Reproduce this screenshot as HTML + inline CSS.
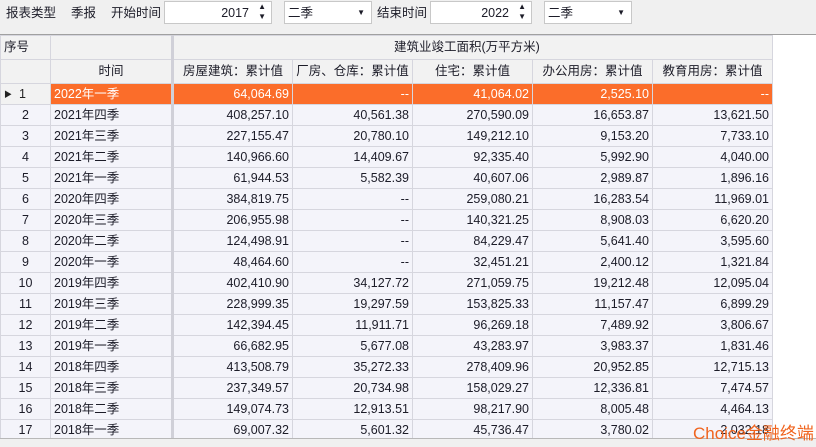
<!DOCTYPE html><html><head><meta charset="utf-8"><style>
*{margin:0;padding:0;box-sizing:border-box}
body{width:816px;height:447px;background:#f0f0f0;font-family:"Liberation Sans","Noto Sans CJK SC",sans-serif;font-size:12.5px;color:#1c1c28;position:relative;overflow:hidden}
.a{position:absolute;white-space:nowrap;line-height:16px}
.box{position:absolute;background:#fff;border:1px solid #c8c8c8;height:23px;top:1px}
.box .a{top:3px}
.wrap{position:absolute;left:0;top:34px;width:816px;height:405px;background:#fff;border-top:1px solid #a0a0a0}
table{border-collapse:collapse;table-layout:fixed;position:absolute;left:0;top:0}
td{border:1px solid #d6d6de;height:21px;line-height:19px;padding:0 3px;background:#f4f4fa;overflow:hidden;white-space:nowrap;vertical-align:middle}
td span{display:inline-block;line-height:19px;vertical-align:top}
td.r{text-align:right}
td.c{text-align:center}
tr.h td{background:#f2f2f2;height:24px}
tr.sel td{background:#fb6d2a;color:#fff}
td.sep{border-right:3px solid #d0d0d8}
</style></head><body>
<div class="a" style="left:6px;top:5px">报表类型</div>
<div class="a" style="left:71px;top:5px">季报</div>
<div class="a" style="left:111px;top:5px">开始时间</div>
<div class="box" style="left:164px;width:108px"><span class="a" style="right:22px">2017</span><span class="a" style="right:5px;top:0;font-size:8px;line-height:10px">▲<br>▼</span></div>
<div class="box" style="left:284px;width:88px"><span class="a" style="left:3px">二季</span><span class="a" style="right:6px;font-size:8px">▼</span></div>
<div class="a" style="left:377px;top:5px">结束时间</div>
<div class="box" style="left:430px;width:102px"><span class="a" style="right:22px">2022</span><span class="a" style="right:5px;top:0;font-size:8px;line-height:10px">▲<br>▼</span></div>
<div class="box" style="left:544px;width:88px"><span class="a" style="left:3px">二季</span><span class="a" style="right:6px;font-size:8px">▼</span></div>
<div class="wrap">
<table>
<colgroup><col style="width:50px"><col style="width:122px"><col style="width:120px"><col style="width:120px"><col style="width:120px"><col style="width:120px"><col style="width:120px"></colgroup>
<tr class="h"><td>序号</td><td class="sep"></td><td colspan="5" style="padding-left:220px">建筑业竣工面积(万平方米)</td></tr>
<tr class="h"><td></td><td class="c sep">时间</td><td class="c">房屋建筑：累计值</td><td class="c">厂房、仓库：累计值</td><td class="c">住宅：累计值</td><td class="c">办公用房：累计值</td><td class="c">教育用房：累计值</td></tr>
<tr class="sel"><td style="background:#f2f2f2;color:#222"><span style="font-size:8px">▶</span>&nbsp;&nbsp;1</td><td class="sep"><span>2022年一季</span></td><td class="r">64,064.69</td><td class="r">--</td><td class="r">41,064.02</td><td class="r">2,525.10</td><td class="r">--</td></tr>
<tr><td class="c">2</td><td class="sep"><span>2021年四季</span></td><td class="r">408,257.10</td><td class="r">40,561.38</td><td class="r">270,590.09</td><td class="r">16,653.87</td><td class="r">13,621.50</td></tr>
<tr><td class="c">3</td><td class="sep"><span>2021年三季</span></td><td class="r">227,155.47</td><td class="r">20,780.10</td><td class="r">149,212.10</td><td class="r">9,153.20</td><td class="r">7,733.10</td></tr>
<tr><td class="c">4</td><td class="sep"><span>2021年二季</span></td><td class="r">140,966.60</td><td class="r">14,409.67</td><td class="r">92,335.40</td><td class="r">5,992.90</td><td class="r">4,040.00</td></tr>
<tr><td class="c">5</td><td class="sep"><span>2021年一季</span></td><td class="r">61,944.53</td><td class="r">5,582.39</td><td class="r">40,607.06</td><td class="r">2,989.87</td><td class="r">1,896.16</td></tr>
<tr><td class="c">6</td><td class="sep"><span>2020年四季</span></td><td class="r">384,819.75</td><td class="r">--</td><td class="r">259,080.21</td><td class="r">16,283.54</td><td class="r">11,969.01</td></tr>
<tr><td class="c">7</td><td class="sep"><span>2020年三季</span></td><td class="r">206,955.98</td><td class="r">--</td><td class="r">140,321.25</td><td class="r">8,908.03</td><td class="r">6,620.20</td></tr>
<tr><td class="c">8</td><td class="sep"><span>2020年二季</span></td><td class="r">124,498.91</td><td class="r">--</td><td class="r">84,229.47</td><td class="r">5,641.40</td><td class="r">3,595.60</td></tr>
<tr><td class="c">9</td><td class="sep"><span>2020年一季</span></td><td class="r">48,464.60</td><td class="r">--</td><td class="r">32,451.21</td><td class="r">2,400.12</td><td class="r">1,321.84</td></tr>
<tr><td class="c">10</td><td class="sep"><span>2019年四季</span></td><td class="r">402,410.90</td><td class="r">34,127.72</td><td class="r">271,059.75</td><td class="r">19,212.48</td><td class="r">12,095.04</td></tr>
<tr><td class="c">11</td><td class="sep"><span>2019年三季</span></td><td class="r">228,999.35</td><td class="r">19,297.59</td><td class="r">153,825.33</td><td class="r">11,157.47</td><td class="r">6,899.29</td></tr>
<tr><td class="c">12</td><td class="sep"><span>2019年二季</span></td><td class="r">142,394.45</td><td class="r">11,911.71</td><td class="r">96,269.18</td><td class="r">7,489.92</td><td class="r">3,806.67</td></tr>
<tr><td class="c">13</td><td class="sep"><span>2019年一季</span></td><td class="r">66,682.95</td><td class="r">5,677.08</td><td class="r">43,283.97</td><td class="r">3,983.37</td><td class="r">1,831.46</td></tr>
<tr><td class="c">14</td><td class="sep"><span>2018年四季</span></td><td class="r">413,508.79</td><td class="r">35,272.33</td><td class="r">278,409.96</td><td class="r">20,952.85</td><td class="r">12,715.13</td></tr>
<tr><td class="c">15</td><td class="sep"><span>2018年三季</span></td><td class="r">237,349.57</td><td class="r">20,734.98</td><td class="r">158,029.27</td><td class="r">12,336.81</td><td class="r">7,474.57</td></tr>
<tr><td class="c">16</td><td class="sep"><span>2018年二季</span></td><td class="r">149,074.73</td><td class="r">12,913.51</td><td class="r">98,217.90</td><td class="r">8,005.48</td><td class="r">4,464.13</td></tr>
<tr><td class="c">17</td><td class="sep"><span>2018年一季</span></td><td class="r">69,007.32</td><td class="r">5,601.32</td><td class="r">45,736.47</td><td class="r">3,780.02</td><td class="r">2,032.18</td></tr>
</table>
</div>
<div class="a" style="left:0;top:438px;width:816px;height:9px;background:#f0f0f0;border-top:1px solid #b8b8b8"></div>
<div class="a" style="left:693px;top:424px;color:#f0641e;font-size:17px;line-height:20px">Choice金融终端</div>
</body></html>
